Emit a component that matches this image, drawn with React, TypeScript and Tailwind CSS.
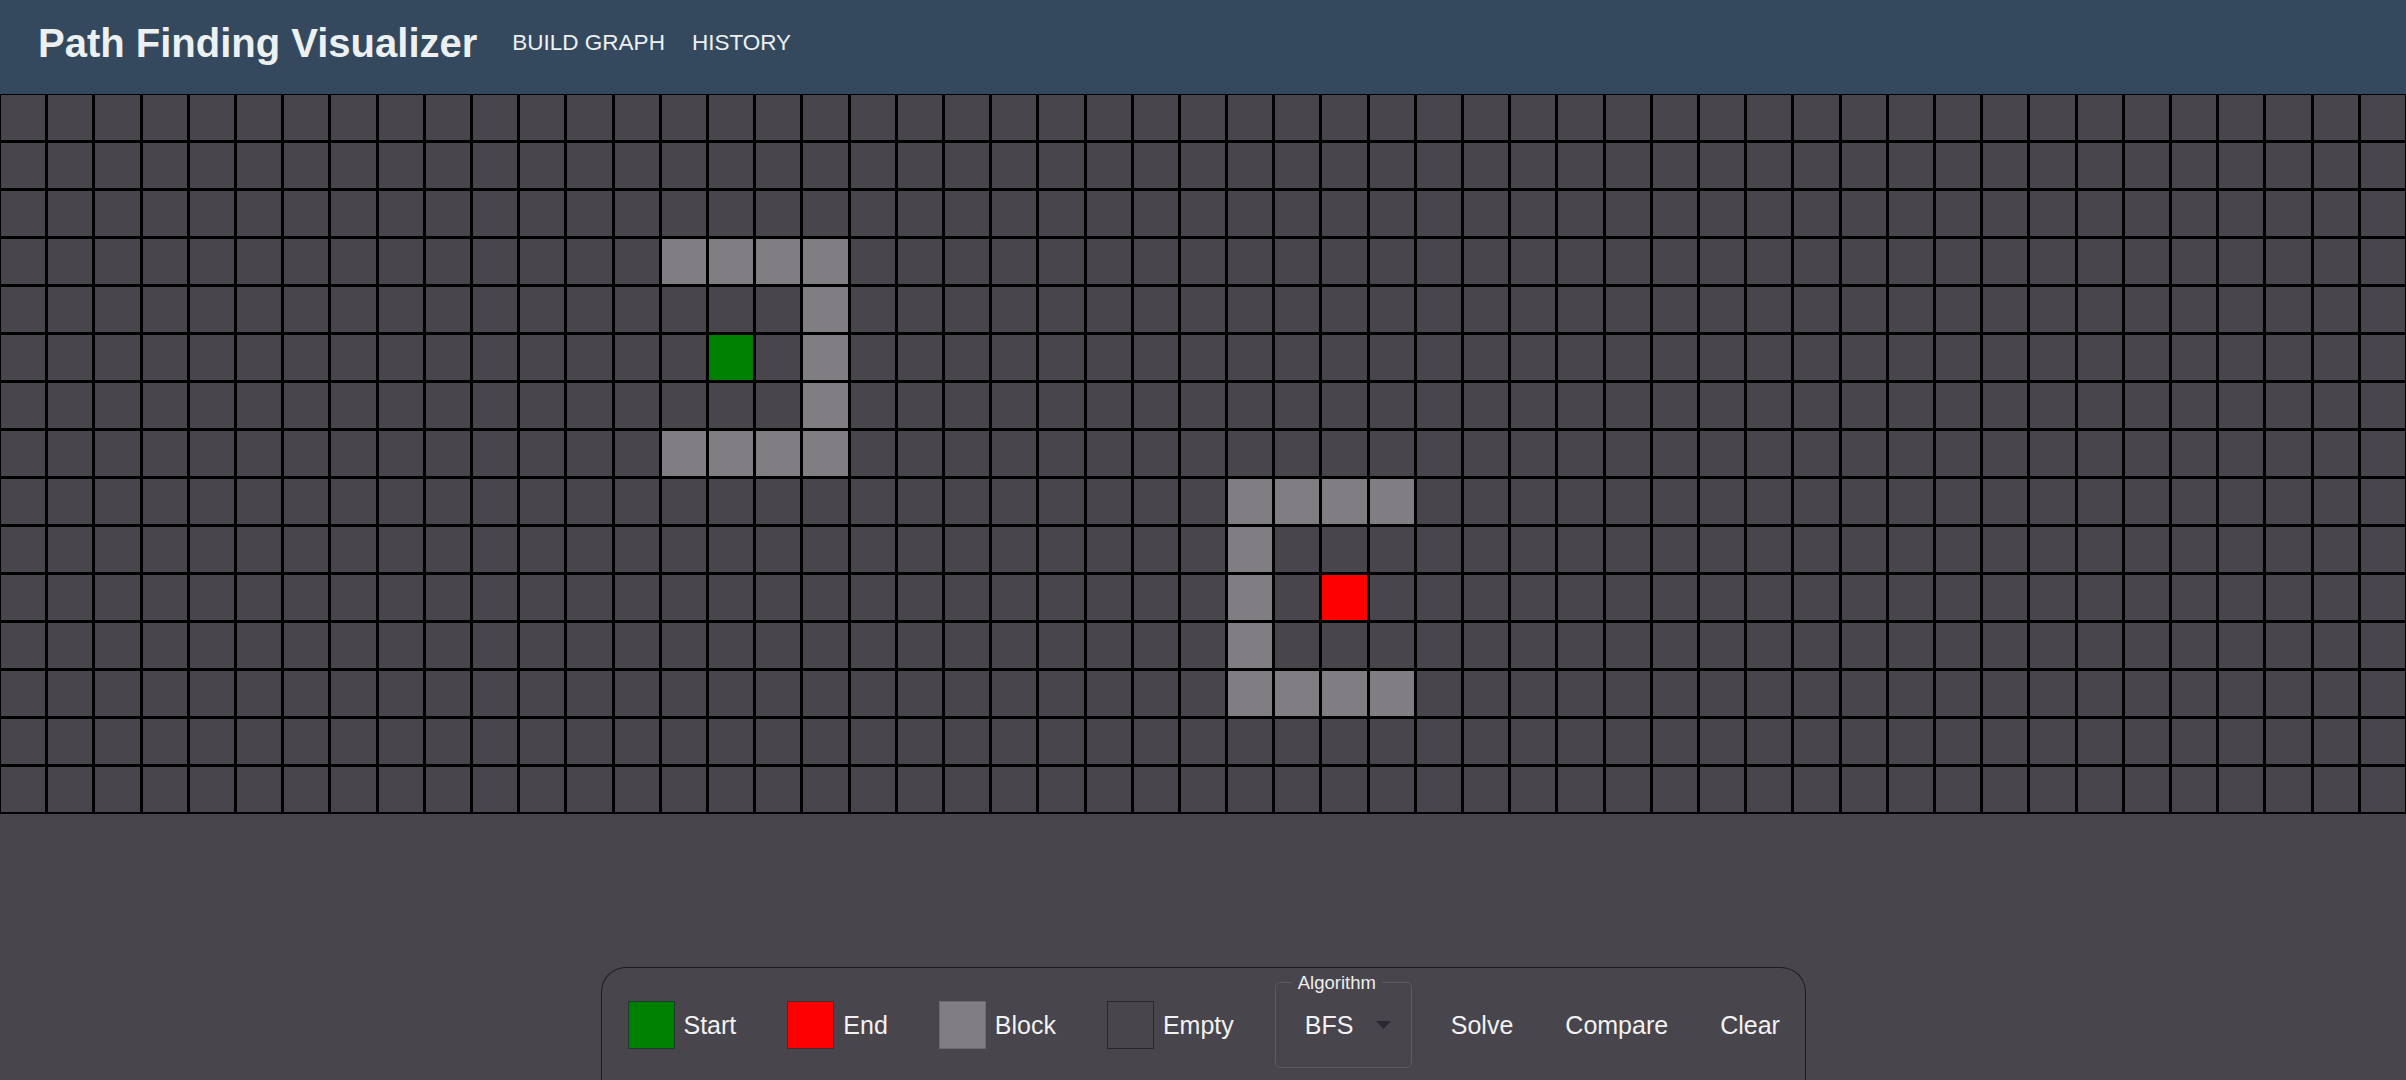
import React from "react";

const ROWS = 15;
const COLS = 51;

// walls around the start and end nodes
const walls = new Set<string>();
for (let c = 14; c <= 17; c++) {
  walls.add(`3-${c}`);
  walls.add(`7-${c}`);
}
for (let r = 4; r <= 6; r++) walls.add(`${r}-17`);
for (let c = 26; c <= 29; c++) {
  walls.add(`8-${c}`);
  walls.add(`12-${c}`);
}
for (let r = 9; r <= 11; r++) walls.add(`${r}-26`);

const START = "5-15";
const END = "10-28";

const cellColor = (key: string) => {
  if (key === START) return "bg-[#008000]";
  if (key === END) return "bg-[#ff0000]";
  if (walls.has(key)) return "bg-[#807e83]";
  return "bg-[#48454c]";
};

const legend = [
  { label: "Start", swatch: "bg-[#008000] border-[#1d3b2c]" },
  { label: "End", swatch: "bg-[#ff0000] border-[#4a2a2e]" },
  { label: "Block", swatch: "bg-[#807e83] border-[#6c6a6f]" },
  { label: "Empty", swatch: "bg-[#48454c] border-[#29272d]" },
];

function Header() {
  return (
    <header className="h-[94px] shrink-0 bg-[#34495e] flex items-center pb-[8px] pl-[38px] text-[#ecf0f1]">
      <h1 className="text-[40px] font-bold leading-none">Path Finding Visualizer</h1>
      <nav className="flex items-center ml-[35px] gap-[27px] text-[22.5px] leading-none">
        <a href="#">BUILD GRAPH</a>
        <a href="#">HISTORY</a>
      </nav>
    </header>
  );
}

function Grid() {
  const cells = [];
  for (let r = 0; r < ROWS; r++) {
    for (let c = 0; c < COLS; c++) {
      const key = `${r}-${c}`;
      cells.push(<div key={key} className={`h-[47px] border border-black ${cellColor(key)}`} />);
    }
  }
  return (
    <div className="grid grid-cols-[repeat(51,minmax(0,1fr))] gap-px bg-black border-b border-black shrink-0">
      {cells}
    </div>
  );
}

function Toolbar() {
  return (
    <div className="mt-auto self-center w-[1205px] h-[113px] shrink-0 border border-b-0 border-[#1c1a1f] rounded-t-[25px] flex items-start pl-[26px] text-[25px] text-[#f2f2f2]">
      <div className="h-[114px] flex items-center">
        <div className="flex items-center gap-[51px]">
          {legend.map((l) => (
            <div key={l.label} className="flex items-center gap-[9px]">
              <span className={`block w-[47px] h-[48px] border ${l.swatch}`} />
              <span className="leading-none">{l.label}</span>
            </div>
          ))}
        </div>
        <div className="relative ml-[41px] w-[137px] h-[86px] border border-[#5d5a61] rounded-[5px] flex items-center pl-[29px] pr-[20px] justify-between">
          <span className="absolute -top-[11px] left-[16px] px-[6px] bg-[#48454c] text-[18.5px] leading-[21px] text-[#eeeeee]">
            Algorithm
          </span>
          <span className="leading-none">BFS</span>
          <svg width="15" height="8" viewBox="0 0 15 8">
            <polygon points="0,0 15,0 7.5,8" fill="#2a2830" />
          </svg>
        </div>
        <div className="flex items-center ml-[39px] gap-[52px]">
          <button className="leading-none">Solve</button>
          <button className="leading-none">Compare</button>
          <button className="leading-none">Clear</button>
        </div>
      </div>
    </div>
  );
}

export default function App() {
  return (
    <div className="h-screen overflow-hidden flex flex-col bg-[#48454c] font-['Liberation_Sans',Arial,sans-serif]">
      <Header />
      <Grid />
      <Toolbar />
    </div>
  );
}
